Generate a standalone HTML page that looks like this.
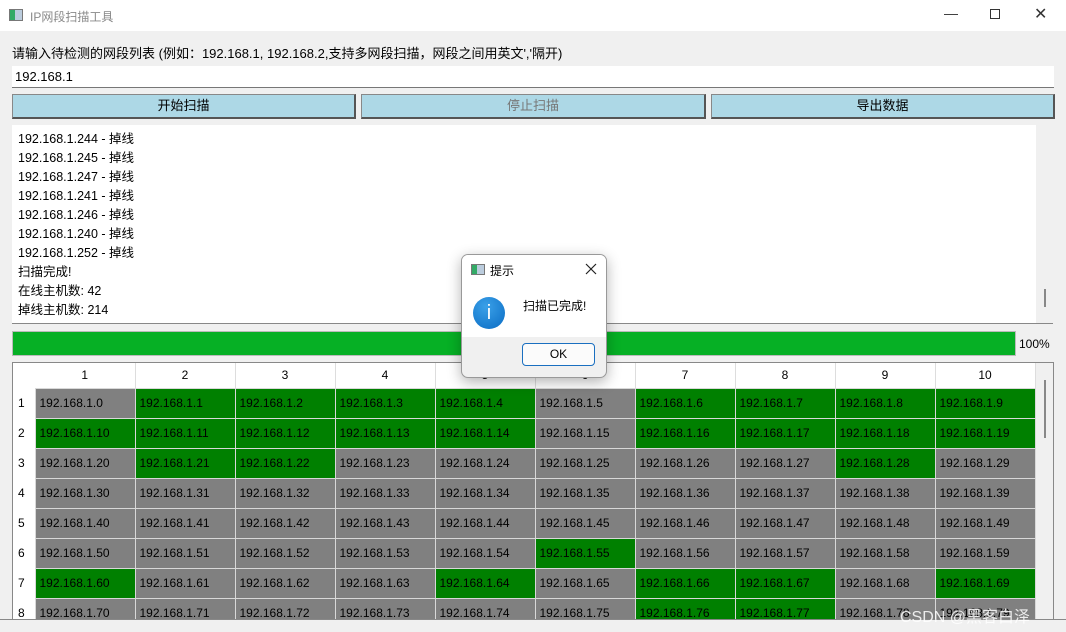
<!DOCTYPE html><html><head><meta charset="utf-8"><style>
*{margin:0;padding:0;box-sizing:border-box}
body{width:1066px;height:632px;background:#f0f0f0;font-family:"Liberation Sans","Noto Sans CJK SC",sans-serif;font-size:12px;color:#000;position:relative;overflow:hidden}
.a{position:absolute}
.btn{position:absolute;top:94px;height:25px;background:#add8e6;border:1px solid #888;border-right:2px solid #555;border-bottom:2px solid #555;text-align:center;line-height:22px;font-size:13px}
.log div{height:19px;line-height:19px}
table{border-collapse:collapse;position:absolute;left:13px;top:363px}
td{width:100px;height:30px;border:1px solid #d8d8d8;padding-left:4px;font-size:12px}
td.h{width:22px;background:#fff;border:none;padding-left:5px}
th{height:25px;background:#fff;font-weight:normal;border-right:1px solid #ddd;font-size:12px}
.g{background:#008000}.n{background:#808080}
</style></head><body>
<div class="a" style="left:0;top:0;width:1066px;height:31px;background:#fff"></div>
<div class="a" style="left:9px;top:9px;width:14px;height:12px;border:1px solid #777;background:linear-gradient(90deg,#3a6 0 40%,#bcd 40%)"></div>
<div class="a" style="left:30px;top:8px;color:#888;font-size:12px">IP网段扫描工具</div>
<div class="a" style="left:944px;top:5px;color:#333;font-size:14px">—</div>
<div class="a" style="left:990px;top:9px;width:10px;height:10px;border:1px solid #333"></div>
<div class="a" style="left:1034px;top:4px;font-size:16px;color:#333">✕</div>
<div class="a" style="left:12px;top:43px;font-size:13px">请输入待检测的网段列表 (例如：192.168.1, 192.168.2,支持多网段扫描，网段之间用英文','隔开)</div>
<div class="a" style="left:12px;top:66px;width:1042px;height:22px;background:#fff;border-bottom:1px solid #777;padding:3px 3px;font-size:13px">192.168.1</div>
<div class="btn" style="left:12px;width:344px">开始扫描</div>
<div class="btn" style="left:361px;width:345px;color:#777">停止扫描</div>
<div class="btn" style="left:711px;width:344px">导出数据</div>
<div class="a log" style="left:12px;top:125px;width:1024px;height:199px;background:#fff;border-bottom:1px solid #888;padding:5px 6px;font-size:12.5px">
<div>192.168.1.244 - 掉线</div><div>192.168.1.245 - 掉线</div><div>192.168.1.247 - 掉线</div><div>192.168.1.241 - 掉线</div><div>192.168.1.246 - 掉线</div><div>192.168.1.240 - 掉线</div><div>192.168.1.252 - 掉线</div><div>扫描完成!</div><div>在线主机数: 42</div><div>掉线主机数: 214</div></div>
<div class="a" style="left:1036px;top:125px;width:17px;height:199px;background:#f0f0f0;border-bottom:1px solid #888"></div>
<div class="a" style="left:1044px;top:289px;width:2px;height:18px;background:#888"></div>
<div class="a" style="left:12px;top:331px;width:1004px;height:25px;background:#06b025;border:1px solid #bbb"></div>
<div class="a" style="left:1019px;top:337px;font-size:12px">100%</div>
<div class="a" style="left:12px;top:362px;width:1042px;height:270px;border:1px solid #888;background:#f0f0f0"></div>
<div class="a" style="left:1036px;top:363px;width:17px;height:269px;background:#f0f0f0"></div>
<div class="a" style="left:1044px;top:380px;width:2px;height:58px;background:#888"></div>
<table>
<tr><th style="width:22px;border:none"></th><th>1</th><th>2</th><th>3</th><th>4</th><th>5</th><th>6</th><th>7</th><th>8</th><th>9</th><th>10</th></tr>
<tr><td class="h">1</td><td class="n">192.168.1.0</td><td class="g">192.168.1.1</td><td class="g">192.168.1.2</td><td class="g">192.168.1.3</td><td class="g">192.168.1.4</td><td class="n">192.168.1.5</td><td class="g">192.168.1.6</td><td class="g">192.168.1.7</td><td class="g">192.168.1.8</td><td class="g">192.168.1.9</td></tr>
<tr><td class="h">2</td><td class="g">192.168.1.10</td><td class="g">192.168.1.11</td><td class="g">192.168.1.12</td><td class="g">192.168.1.13</td><td class="g">192.168.1.14</td><td class="n">192.168.1.15</td><td class="g">192.168.1.16</td><td class="g">192.168.1.17</td><td class="g">192.168.1.18</td><td class="g">192.168.1.19</td></tr>
<tr><td class="h">3</td><td class="n">192.168.1.20</td><td class="g">192.168.1.21</td><td class="g">192.168.1.22</td><td class="n">192.168.1.23</td><td class="n">192.168.1.24</td><td class="n">192.168.1.25</td><td class="n">192.168.1.26</td><td class="n">192.168.1.27</td><td class="g">192.168.1.28</td><td class="n">192.168.1.29</td></tr>
<tr><td class="h">4</td><td class="n">192.168.1.30</td><td class="n">192.168.1.31</td><td class="n">192.168.1.32</td><td class="n">192.168.1.33</td><td class="n">192.168.1.34</td><td class="n">192.168.1.35</td><td class="n">192.168.1.36</td><td class="n">192.168.1.37</td><td class="n">192.168.1.38</td><td class="n">192.168.1.39</td></tr>
<tr><td class="h">5</td><td class="n">192.168.1.40</td><td class="n">192.168.1.41</td><td class="n">192.168.1.42</td><td class="n">192.168.1.43</td><td class="n">192.168.1.44</td><td class="n">192.168.1.45</td><td class="n">192.168.1.46</td><td class="n">192.168.1.47</td><td class="n">192.168.1.48</td><td class="n">192.168.1.49</td></tr>
<tr><td class="h">6</td><td class="n">192.168.1.50</td><td class="n">192.168.1.51</td><td class="n">192.168.1.52</td><td class="n">192.168.1.53</td><td class="n">192.168.1.54</td><td class="g">192.168.1.55</td><td class="n">192.168.1.56</td><td class="n">192.168.1.57</td><td class="n">192.168.1.58</td><td class="n">192.168.1.59</td></tr>
<tr><td class="h">7</td><td class="g">192.168.1.60</td><td class="n">192.168.1.61</td><td class="n">192.168.1.62</td><td class="n">192.168.1.63</td><td class="g">192.168.1.64</td><td class="n">192.168.1.65</td><td class="g">192.168.1.66</td><td class="g">192.168.1.67</td><td class="n">192.168.1.68</td><td class="g">192.168.1.69</td></tr>
<tr><td class="h">8</td><td class="n">192.168.1.70</td><td class="n">192.168.1.71</td><td class="n">192.168.1.72</td><td class="n">192.168.1.73</td><td class="n">192.168.1.74</td><td class="n">192.168.1.75</td><td class="g">192.168.1.76</td><td class="g">192.168.1.77</td><td class="n">192.168.1.78</td><td class="n">192.168.1.79</td></tr>
</table>
<div class="a" style="left:0;top:619px;width:1066px;height:13px;background:#f0f0f0;border-top:1px solid #888"></div>
<div class="a" style="left:900px;top:603px;font-size:16px;color:rgba(255,255,255,.85)">CSDN @黑客白泽</div>
<div class="a" style="left:461px;top:254px;width:146px;height:124px;background:#f0f0f0;border:1px solid #999;border-radius:7px;overflow:hidden;box-shadow:0 4px 14px rgba(0,0,0,.3)">
<div style="background:#fff;height:82px;position:relative">
<div class="a" style="left:9px;top:9px;width:14px;height:11px;border:1px solid #777;background:linear-gradient(90deg,#3a6 0 40%,#bcd 40%)"></div>
<div class="a" style="left:28px;top:7px;font-size:12px">提示</div>
<svg class="a" style="left:123px;top:8px" width="12" height="12"><path d="M1 1L11 11M11 1L1 11" stroke="#222" stroke-width="1.2"/></svg>
<div class="a" style="left:11px;top:42px;width:32px;height:32px;border-radius:50%;background:radial-gradient(circle at 40% 30%,#3aa0e8,#0a6cc4);color:#fff;text-align:center;line-height:32px;font-size:20px">i</div>
<div class="a" style="left:61px;top:42px;font-size:12px">扫描已完成!</div>
</div>
<div class="a" style="left:60px;top:88px;width:73px;height:23px;border:1px solid #1a6fc0;border-radius:4px;background:#fbfbfb;text-align:center;line-height:21px;font-size:12px">OK</div>
</div>
</body></html>
